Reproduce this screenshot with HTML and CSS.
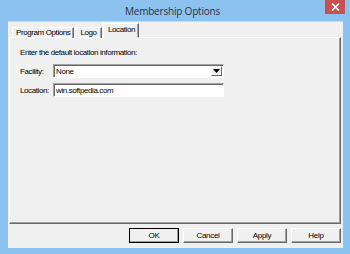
FILE: index.html
```html
<!DOCTYPE html>
<html lang="en">
<head>
    <meta charset="UTF-8">
    <title>Membership Options</title>
    <link rel="stylesheet" href="styles.css">
</head>
<body>
    <div class="window">
        <div class="titlebar">
            <span></span>
            <div class="title">Membership Options</div>
            <div class="close">
                <svg width="9" height="8" viewBox="0 0 9 8"><path d="M1 0.5 L8 7.5 M8 0.5 L1 7.5" stroke="#fff" stroke-width="1.6"/></svg>
            </div>
        </div>
        <div class="client">
            <div class="tabs">
                <div class="tab">Program Options</div>
                <div class="tab">Logo</div>
                <div class="tab active">Location</div>
            </div>
            <div class="panel">
                <p class="intro">Enter the default location information:</p>
                <div class="row">
                    <label>Facility:</label>
                    <div class="combo">
                        <span>None</span>
                        <div class="drop">
                            <svg width="7" height="4" viewBox="0 0 7 4"><path d="M0 0 H7 L3.5 4 Z" fill="#000"/></svg>
                        </div>
                    </div>
                </div>
                <div class="row">
                    <label>Location:</label>
                    <div class="field">win.softpedia.com</div>
                </div>
            </div>
            <div class="buttons">
                <button class="btn default">OK</button>
                <button class="btn">Cancel</button>
                <button class="btn">Apply</button>
                <button class="btn">Help</button>
            </div>
        </div>
    </div>
</body>
</html>
```

FILE: styles.css
```css
body {
    margin: 0;
    font-family: "Liberation Sans", Arial, sans-serif;
    font-size: 8px;
    letter-spacing: -0.4px;
    color: #000;
}
.window {
    width: 350px;
    height: 254px;
    background: #8cc2f0;
    box-sizing: border-box;
    padding: 0 7px 6px 8px;
    display: flex;
    flex-direction: column;
}
.titlebar {
    height: 21px;
    display: grid;
    grid-template-columns: 1fr auto 1fr;
    align-items: start;
}
.title {
    font-family: "Open Sans", "Liberation Sans", sans-serif;
    font-size: 10px;
    letter-spacing: -0.2px;
    color: #2a3240;
    line-height: 22px;
    padding-right: 6px;
}
.close {
    justify-self: end;
    margin-right: -2px;
    width: 20px;
    height: 14px;
    background: #c75050;
    display: flex;
    align-items: center;
    justify-content: center;
}
.client {
    flex: 1;
    background: #f0f0f0;
    display: flex;
    flex-direction: column;
    padding: 0 2px 0 1px;
    border-top: 1px solid #d9d9d9;
}
.tabs {
    display: flex;
    align-items: flex-end;
    height: 16px;
    padding-left: 3px;
    position: relative;
    z-index: 1;
    margin-bottom: -1px;
}
.tab {
    height: 10px;
    line-height: 10px;
    min-width: 20px;
    padding: 0 3px;
    text-align: center;
    border-top: 1px solid #fff;
    border-left: 1px solid #fff;
    border-right: 1px solid #696969;
    box-shadow: inset -1px 0 #a0a0a0;
}
.tab.active {
    height: 13px;
    line-height: 11px;
    min-width: 28px;
    padding: 0 3px;
    background: #f0f0f0;
    margin-left: 1px;
    border-bottom: 1px solid #f0f0f0;
}
.panel {
    height: 187px;
    border-top: 1px solid #fff;
    border-left: 1px solid #fff;
    border-right: 1px solid #696969;
    border-bottom: 1px solid #696969;
    box-shadow: inset -1px -1px #a0a0a0;
    box-sizing: border-box;
    padding: 9px 0 0 10px;
}
.intro {
    margin: 0 0 6px;
    line-height: 11px;
}
.row {
    display: flex;
    align-items: center;
    margin-bottom: 5px;
}
.row label {
    width: 33px;
}
.combo, .field {
    width: 171px;
    height: 14px;
    box-sizing: border-box;
    background: #fff;
    border-top: 1px solid #a0a0a0;
    border-left: 1px solid #a0a0a0;
    border-right: 1px solid #fff;
    border-bottom: 1px solid #fff;
    box-shadow: inset 1px 1px #696969;
    display: flex;
    align-items: center;
    padding-left: 2px;
    line-height: 11px;
}
.combo span {
    flex: 1;
}
.drop {
    width: 11px;
    height: 10px;
    margin-right: 1px;
    background: #f0f0f0;
    border-top: 1px solid #fff;
    border-left: 1px solid #fff;
    border-right: 1px solid #696969;
    border-bottom: 1px solid #696969;
    box-sizing: border-box;
    display: flex;
    align-items: center;
    justify-content: center;
}
.buttons {
    display: flex;
    justify-content: flex-end;
    gap: 4px;
    padding: 4px 0 0;
}
.btn {
    width: 50px;
    height: 15px;
    padding: 0;
    font-family: inherit;
    font-size: 8px;
    letter-spacing: -0.3px;
    background: #f0f0f0;
    border-top: 1px solid #fff;
    border-left: 1px solid #fff;
    border-right: 1px solid #696969;
    border-bottom: 1px solid #696969;
    box-shadow: inset -1px -1px #a0a0a0;
}
.btn.default {
    outline: 1px solid #000;
    outline-offset: -1px;
}
```
